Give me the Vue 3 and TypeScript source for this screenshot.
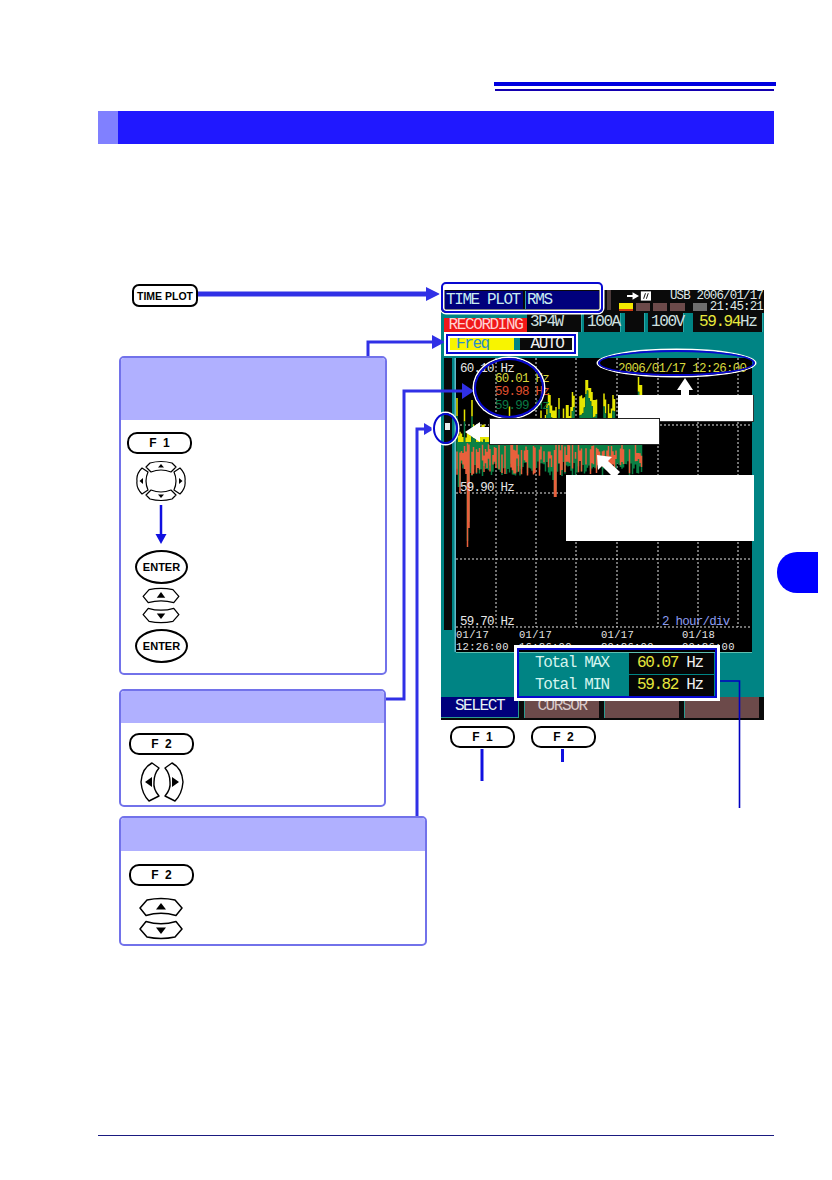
<script setup lang="ts">
import { computed } from 'vue'

function makeRandom(seed: number) {
  let s = seed
  return () => {
    s = (s * 9301 + 49297) % 233280
    return s / 233280
  }
}

const yellowPeaks: Array<[number, number]> = [
  [1, 40], [16, 42], [103, 40], [111, 47], [131, 22], [134, 30], [138, 42], [157, 37], [183, 19], [185, 27]
]
const orangeDrops: Array<[number, number]> = [[12, 189], [13, 170], [99, 139], [97, 128], [3, 135]]

const wave = computed(() => {
  const r = makeRandom(77)
  let yellow = ''
  let green = ''
  let orange = ''
  for (let x = 1; x < 187; x += 1.5) {
    const busy = x > 88 && x < 165
    const spike = r() < (busy ? 0.5 : 0.22)
    let top = spike ? (busy ? 32 : 48) + r() * 26 : 66 + r() * 14
    for (const [px, py] of yellowPeaks) if (Math.abs(x - px) < 1.2) top = py
    const greenTop = Math.min(top + 10 + r() * 10, 84)
    const greenBottom = 102 + r() * 16
    const orangeTop = 84 + r() * 14
    let orangeBottom = 100 + r() * 18
    for (const [px, py] of orangeDrops) if (Math.abs(x - px) < 1.2) orangeBottom = py
    yellow += `M${x} ${top.toFixed(1)}V${greenTop.toFixed(1)}`
    green += `M${x} ${greenTop.toFixed(1)}V${Math.max(greenBottom, orangeBottom - 6).toFixed(1)}`
    if (r() < 0.62) orange += `M${x} ${orangeTop.toFixed(1)}V${orangeBottom.toFixed(1)}`
  }
  return { yellow, green, orange }
})

const vGrid = [40, 80, 120, 161, 202, 242, 282]
const hGrid = [67, 135, 201, 269]
const timeLabels = [
  { x: 0, d: '01/17', t: '12:26:00' },
  { x: 63, d: '01/17', t: '16:26:00' },
  { x: 145, d: '01/17', t: '20:26:00' },
  { x: 226, d: '01/18', t: '00:26:00' }
]
</script>

<template>
  <div class="page">
    <svg class="defs" aria-hidden="true">
      <symbol id="key-up" viewBox="0 0 46 20">
        <path d="M2 11 L9 3 Q23 0 37 3 L44 11 L38 18.5 Q23 14 8 18.5 Z" fill="#fff" stroke="#000" stroke-width="1.5" stroke-linejoin="round" />
        <path d="M18 12.5 L23 6 L28 12.5 Z" fill="#000" />
      </symbol>
      <symbol id="key-down" viewBox="0 0 46 20">
        <g transform="matrix(1 0 0 -1 0 20)">
          <path d="M2 11 L9 3 Q23 0 37 3 L44 11 L38 18.5 Q23 14 8 18.5 Z" fill="#fff" stroke="#000" stroke-width="1.5" stroke-linejoin="round" />
          <path d="M18 12.5 L23 6 L28 12.5 Z" fill="#000" />
        </g>
      </symbol>
    </svg>

    <div class="rule-a"></div>
    <div class="rule-b"></div>
    <div class="title-bar"><span class="swatch"></span></div>

    <div class="diagram">
      <div class="left">
        <div class="key time-key">TIME PLOT</div>

        <section class="panel panel-one">
          <div class="panel-head tall"></div>
          <div class="panel-body">
            <div class="key fkey f1">F 1</div>
            <svg class="dpad" viewBox="0 0 50 44">
              <g fill="#fff" stroke="#000" stroke-width="1.2" stroke-linejoin="round">
                <path d="M10 8 L14 4 Q25 1 36 4 L40 8 L35 13 Q25 9 15 13 Z" />
                <path d="M10 36 L14 40 Q25 43 36 40 L40 36 L35 31 Q25 35 15 31 Z" />
                <path d="M6 9 Q0 15 1 22 Q0 29 6 35 L12 31 Q8 22 12 13 Z" />
                <path d="M44 9 Q50 15 49 22 Q50 29 44 35 L38 31 Q42 22 38 13 Z" />
              </g>
              <g fill="#000">
                <path d="M22 8.5 L25 5 L28 8.5 Z" />
                <path d="M22 35.5 L25 39 L28 35.5 Z" />
                <path d="M3.5 22 L7 19 V25 Z" />
                <path d="M46.5 22 L43 19 V25 Z" />
              </g>
            </svg>
            <svg class="down-arrow" viewBox="0 0 16 39">
              <path d="M8 0 V30" stroke="#1010e0" stroke-width="2.5" />
              <path d="M2.5 29 H13.5 L8 39 Z" fill="#1010e0" />
            </svg>
            <div class="key enter">ENTER</div>
            <svg class="small-key first"><use href="#key-up" /></svg>
            <svg class="small-key second"><use href="#key-down" /></svg>
            <div class="key enter last">ENTER</div>
          </div>
        </section>

        <section class="panel panel-two">
          <div class="panel-head"></div>
          <div class="panel-body">
            <div class="key fkey f2">F 2</div>
            <svg class="left-right" viewBox="0 0 46 40">
              <g fill="#fff" stroke="#000" stroke-width="1.4" stroke-linejoin="round">
                <path d="M13 1 Q3 6 2 20 Q3 32 10 39 L20 34 Q14 27 15 20 Q15 12 20 6 Z" />
                <path d="M33 1 Q43 6 44 20 Q43 32 36 39 L26 34 Q32 27 31 20 Q31 12 26 6 Z" />
              </g>
              <path d="M6 20 L13 15 V25 Z" fill="#000" />
              <path d="M40 20 L33 15 V25 Z" fill="#000" />
            </svg>
          </div>
        </section>

        <section class="panel panel-three">
          <div class="panel-head"></div>
          <div class="panel-body">
            <div class="key fkey f2b">F 2</div>
            <svg class="big-key first"><use href="#key-up" /></svg>
            <svg class="big-key second"><use href="#key-down" /></svg>
          </div>
        </section>
      </div>

      <div class="right">
        <div class="device">
          <div class="status">
            <span class="title-box wide">TIME PLOT</span>
            <span class="title-box">RMS</span>
            <span class="divider"></span>
            <div class="status-right">
              <div class="status-row">
                <svg class="plug" viewBox="0 0 26 10">
                  <path d="M0 4 H6 V1 L13 5 L6 9 V6 H0 Z" fill="#fff" />
                  <path d="M15 0 H26 V10 H15 Z" fill="#fff" />
                  <path d="M18 8 L20 2 M21 8 L23 2" stroke="#000" stroke-width="1" />
                </svg>
                <span class="clock">USB 2006/01/17</span>
              </div>
              <div class="status-row">
                <span class="lamp on"></span>
                <span class="lamp"></span>
                <span class="lamp"></span>
                <span class="lamp"></span>
                <span class="lamp grey"></span>
                <span class="clock">21:45:21</span>
              </div>
            </div>
          </div>

          <div class="readouts">
            <span class="recording">RECORDING</span>
            <span class="readout r-wire">3P4W</span>
            <span class="readout r-amp">100A</span>
            <span class="readout r-blank"></span>
            <span class="readout r-volt">100V</span>
            <span class="readout r-freq"><b>59.94</b>Hz</span>
          </div>

          <div class="mode">
            <span class="mode-freq">Freq</span>
            <span class="mode-auto">AUTO</span>
          </div>

          <div class="plot-row">
            <div class="strip"><span class="thumb"></span></div>
            <svg class="plot" viewBox="0 0 296 294">
              <g stroke="#e4e4e4" stroke-width="1" stroke-dasharray="2 2">
                <path v-for="x in vGrid" :key="'v' + x" :d="`M${x} 0V269`" />
                <path v-for="y in hGrid" :key="'h' + y" :d="`M0 ${y}H296`" />
              </g>
              <g fill="none" stroke-width="1.5">
                <path :d="wave.yellow" stroke="#e6e600" />
                <path :d="wave.green" stroke="#0a8044" />
                <path :d="wave.orange" stroke="#e8603c" />
              </g>
              <g class="plot-text">
                <text x="4" y="14" fill="#e6e6e6">60.10 Hz</text>
                <text x="39" y="24" fill="#d6d63c">60.01 Hz</text>
                <text x="39" y="37" fill="#e0502e">59.98 Hz</text>
                <text x="39" y="51" fill="#0a7a45">59.99 Hz</text>
                <text x="162" y="14" fill="#d8d83c">2006/01/17 12:26:00</text>
                <text x="4" y="133" fill="#e6e6e6">59.90 Hz</text>
                <text x="4" y="267" fill="#e6e6e6">59.70 Hz</text>
                <text x="206" y="267" fill="#8c9cf0">2 hour/div</text>
              </g>
              <g class="time-text">
                <template v-for="t in timeLabels" :key="t.x">
                  <text :x="t.x" y="280" fill="#e6e6e6">{{ t.d }}</text>
                  <text :x="t.x" y="292" fill="#e6e6e6">{{ t.t }}</text>
                </template>
              </g>
            </svg>
          </div>

          <div class="totals">
            <div class="total-row">
              <span class="total-label">Total MAX</span>
              <span class="total-value"><b>60.07</b> Hz</span>
            </div>
            <div class="total-row">
              <span class="total-label">Total MIN</span>
              <span class="total-value"><b>59.82</b> Hz</span>
            </div>
          </div>

          <div class="softkeys">
            <span class="soft active">SELECT</span>
            <span class="soft">CURSOR</span>
            <span class="soft"></span>
            <span class="soft"></span>
          </div>
        </div>

        <div class="device-keys">
          <div class="key fkey">F 1</div>
          <div class="key fkey">F 2</div>
        </div>
      </div>
    </div>

    <div class="footer-rule"></div>
    <div class="side-tab"></div>

    <svg class="overlay" viewBox="0 0 832 1180">
      <g fill="none" stroke="#3030e6">
        <path d="M198 294 H428" stroke-width="5" />
        <path d="M368 356 V342 H434" stroke-width="3" />
        <path d="M386 699 H404 V391 H464" stroke-width="3" />
        <path d="M417 816 V429 H425" stroke-width="3" />
      </g>
      <g fill="#3030e6">
        <path d="M426 287 L440 294 L426 301 Z" />
        <path d="M432 335 L445 342 L432 349 Z" />
        <path d="M462 383 L474 391 L462 399 Z" />
        <path d="M424 423 L434 429 L424 435 Z" />
      </g>
      <g fill="none" stroke="#1010e0" stroke-width="3">
        <path d="M482 749 V781" />
        <path d="M562.5 749 V762" />
      </g>
      <path d="M717 681 H739.5 V808" fill="none" stroke="#0000c0" stroke-width="1.6" />
      <g fill="#fff">
        <path d="M685 378 L693 390 H689 V396 H681 V390 H677 Z" />
        <path d="M465 432 L480 422 V427 H490 V437 H480 V442 Z" />
        <path d="M597 455 L612 457 L608 461 L620 472 L614 478 L602 466 L598 470 Z" />
      </g>
    </svg>

    <span class="frame frame-title"></span>
    <span class="frame frame-mode"></span>
    <span class="frame frame-circle"></span>
    <span class="frame frame-thumb"></span>
    <span class="frame frame-date"></span>
    <span class="frame frame-total"></span>

    <span class="callout callout-date"></span>
    <span class="callout callout-thumb"></span>
    <span class="callout callout-wave"></span>
  </div>
</template>

<style>
html,
body {
  margin: 0;
  background: #fff;
}
</style>

<style scoped>
.page {
  position: relative;
  width: 832px;
  height: 1180px;
  overflow: hidden;
  background: #fff;
  font-family: "Liberation Sans", Arial, sans-serif;
}
.defs {
  position: absolute;
  width: 0;
  height: 0;
}
.rule-a {
  margin: 82px 56px 0 494px;
  height: 4px;
  background: #0000e0;
}
.rule-b {
  margin: 3px 58px 0 495px;
  height: 2px;
  background: #1400b0;
}
.title-bar {
  display: flex;
  margin: 20px 58px 0 98px;
  height: 33px;
  background: #2018ff;
}
.swatch {
  width: 20px;
  background: #8080ff;
}
.diagram {
  display: flex;
  margin-top: 140px;
  padding-left: 119px;
}
.left {
  width: 308px;
  display: flex;
  flex-direction: column;
  align-items: flex-start;
}
.key {
  box-sizing: border-box;
  display: flex;
  align-items: center;
  justify-content: center;
  background: #fff;
  color: #000;
  border: 2.5px solid #000;
  font-weight: 700;
}
.time-key {
  width: 66px;
  height: 23px;
  margin-left: 13px;
  border-radius: 7px;
  font-size: 10.5px;
  white-space: nowrap;
}
.fkey {
  width: 65px;
  height: 22px;
  border-radius: 10px;
  font-size: 12px;
  word-spacing: 3px;
}
.enter {
  width: 53px;
  height: 34px;
  margin-top: 6px;
  margin-left: 8px;
  border-radius: 50%;
  font-size: 11px;
}
.enter.last {
  margin-top: 5px;
}
.panel {
  box-sizing: border-box;
  border: 2px solid #7272ea;
  border-radius: 5px;
  overflow: hidden;
  background: #fff;
}
.panel-head {
  height: 32px;
  background: #b0b0ff;
}
.panel-head.tall {
  height: 62px;
}
.panel-body {
  display: flex;
  flex-direction: column;
  align-items: flex-start;
}
.panel-one {
  width: 268px;
  margin-top: 49px;
}
.panel-one .panel-body {
  padding: 12px 0 10px 6px;
}
.dpad {
  width: 50px;
  height: 44px;
  margin: 5px 0 0 9px;
}
.down-arrow {
  width: 16px;
  height: 39px;
  margin: 2px 0 0 26px;
}
.small-key {
  width: 40px;
  height: 17px;
  margin-left: 14px;
}
.small-key.first {
  margin-top: 3px;
}
.small-key.second {
  margin-top: 3px;
}
.panel-two {
  width: 267px;
  margin-top: 14px;
}
.panel-two .panel-body {
  padding: 10px 0 3px 8px;
}
.left-right {
  width: 46px;
  height: 40px;
  margin: 7px 0 0 10px;
}
.panel-three {
  width: 308px;
  margin-top: 9px;
}
.panel-three .panel-head {
  height: 33px;
}
.panel-three .panel-body {
  padding: 13px 0 4px 8px;
}
.big-key {
  width: 46px;
  height: 20px;
  margin-left: 9px;
}
.big-key.first {
  margin-top: 11px;
}
.big-key.second {
  margin-top: 3px;
}
.right {
  margin-left: 14px;
  margin-top: 6px;
}
.device {
  display: flex;
  flex-direction: column;
  width: 323px;
  height: 430px;
  background: #008484;
  font-family: "Liberation Mono", "DejaVu Sans Mono", monospace;
  color: #e8f4f4;
  white-space: nowrap;
}
.status {
  display: flex;
  align-items: flex-start;
  height: 23px;
  padding-left: 4px;
  background: #0a0a0a;
}
.title-box {
  box-sizing: border-box;
  width: 74px;
  height: 18px;
  margin: 1px 0 0 2px;
  padding-left: 1px;
  background: #00007c;
  border-left: 1px solid #2a9aa8;
  color: #c8ecf0;
  font-size: 16px;
  letter-spacing: -1.4px;
  line-height: 18px;
}
.title-box.wide {
  width: 78px;
  margin-left: 0;
  border-left: 0;
}
.divider {
  width: 4px;
  height: 20px;
  margin-left: 8px;
  background: #4c3a3a;
}
.status-right {
  display: flex;
  flex-direction: column;
  width: 147px;
  margin-left: 6px;
}
.status-row {
  display: flex;
  align-items: center;
  gap: 3px;
  height: 11px;
  padding-left: 2px;
  font-size: 12.5px;
  letter-spacing: -0.85px;
}
.plug {
  width: 24px;
  height: 10px;
  margin-left: 8px;
}
.clock {
  margin-left: auto;
  padding-right: 1px;
  color: #dfe8e8;
}
.lamp {
  width: 15px;
  height: 8px;
  background: #6c4a4a;
}
.lamp.on {
  background: linear-gradient(#f4e800 70%, #d03a10 70%);
}
.lamp.grey {
  margin-left: 5px;
  background: #6e6e6e;
}
.readouts {
  display: flex;
  align-items: flex-end;
  height: 19px;
  padding-left: 3px;
  font-size: 16px;
  letter-spacing: -1.4px;
}
.recording {
  width: 83px;
  height: 14px;
  background: #f01818;
  color: #ffd0d0;
  line-height: 14px;
  text-align: center;
}
.readout {
  box-sizing: border-box;
  height: 19px;
  background: #0a0a0a;
  color: #cfe0e0;
  line-height: 18px;
  padding-left: 3px;
  border-right: 1px solid #2aa8a8;
}
.r-wire {
  width: 55px;
}
.r-amp {
  width: 37px;
  margin-left: 2px;
}
.r-blank {
  width: 20px;
  margin-left: 4px;
}
.r-volt {
  width: 36px;
  margin-left: 3px;
}
.r-freq {
  width: 70px;
  margin-left: 9px;
  padding-left: 6px;
}
.r-freq b {
  font-weight: 400;
  color: #e8e83c;
}
.mode {
  display: flex;
  height: 26px;
  padding: 5px 0 0 8px;
  box-sizing: border-box;
  font-size: 16px;
  letter-spacing: -1.4px;
  line-height: 15px;
}
.mode-freq {
  width: 65px;
  height: 15px;
  padding-left: 7px;
  box-sizing: border-box;
  background: #f8f400;
  color: #2a8cc8;
}
.mode-auto {
  width: 54px;
  height: 15px;
  margin-left: 6px;
  background: #0a0a0a;
  color: #f0f0f0;
  text-align: center;
}
.plot-row {
  display: flex;
  align-items: flex-start;
  height: 294px;
  padding-left: 3px;
}
.strip {
  position: relative;
  width: 8px;
  height: 272px;
  background: #0a0a0a;
}
.thumb {
  position: absolute;
  top: 65px;
  left: 1px;
  width: 5px;
  height: 7px;
  background: #e8eeee;
}
.plot {
  width: 296px;
  height: 294px;
  margin-left: 4px;
  background: #000;
  box-shadow: -1.5px 0 0 #62b8c8, 0 1px 0 #5ec0b0;
}
.plot-text {
  font-size: 12.5px;
  letter-spacing: -0.75px;
  font-family: "Liberation Mono", "DejaVu Sans Mono", monospace;
}
.time-text {
  font-size: 10.5px;
  letter-spacing: 0.3px;
  font-family: "Liberation Mono", "DejaVu Sans Mono", monospace;
}
.totals {
  display: flex;
  flex-direction: column;
  flex: 1;
  padding: 0 0 1px 94px;
  font-size: 16px;
  letter-spacing: -1.4px;
}
.total-row {
  display: flex;
  align-items: center;
  height: 22px;
}
.total-label {
  width: 94px;
  color: #d4f4ee;
}
.total-value {
  box-sizing: border-box;
  width: 85px;
  height: 21px;
  padding-left: 8px;
  background: #050505;
  color: #f0f0f0;
  line-height: 21px;
}
.total-value b {
  font-weight: 400;
  color: #e6e63c;
}
.softkeys {
  display: flex;
  height: 23px;
  gap: 5px;
  padding-right: 2px;
  background: #0a0a0a;
  font-size: 16px;
  letter-spacing: -1.4px;
}
.soft {
  box-sizing: border-box;
  width: 75px;
  height: 21px;
  background: #6c4a4a;
  color: #d8c8c8;
  text-align: center;
  line-height: 18px;
  border-left: 1px solid #2a9a90;
}
.soft.active {
  width: 78px;
  background: #00007c;
  color: #e8f4f4;
  border-bottom: 1px solid #2a9a90;
  border-right: 1px solid #2a9a90;
  border-left: 0;
}
.device-keys {
  display: flex;
  gap: 16px;
  margin: 6px 0 0 9px;
}
.footer-rule {
  height: 1px;
  margin: 189px 58px 0 98px;
  background: #1a1a80;
}
.side-tab {
  position: absolute;
  top: 552px;
  left: 777px;
  width: 41px;
  height: 41px;
  border-radius: 20px 0 0 20px;
  background: #0000ff;
}
.overlay {
  position: absolute;
  inset: 0;
  width: 832px;
  height: 1180px;
  pointer-events: none;
}
.frame {
  position: absolute;
  box-sizing: border-box;
  border: 2.5px solid #0808d0;
  box-shadow: 0 0 0 1.5px #fff, inset 0 0 0 1.5px #fff;
}
.frame-title {
  left: 441px;
  top: 282px;
  width: 162px;
  height: 31px;
  border-radius: 5px;
}
.frame-mode {
  left: 446px;
  top: 334px;
  width: 130px;
  height: 20px;
  border-width: 2px;
  box-shadow: 0 0 0 2px #fff, inset 0 0 0 2px #fff;
}
.frame-circle {
  left: 474px;
  top: 358px;
  width: 70px;
  height: 60px;
  border-radius: 50%;
  box-shadow: 0 0 0 1.5px #fff;
}
.frame-thumb {
  left: 433px;
  top: 413px;
  width: 25px;
  height: 31px;
  border-radius: 50%;
  box-shadow: 0 0 0 1.5px #fff;
}
.frame-date {
  left: 598px;
  top: 350px;
  width: 157px;
  height: 26px;
  border-radius: 50%;
  box-shadow: 0 0 0 1.5px #fff;
}
.frame-total {
  left: 517px;
  top: 648px;
  width: 200px;
  height: 50px;
  border-width: 2px;
  box-shadow: 0 0 0 3px #fff;
}
.callout {
  position: absolute;
  box-sizing: border-box;
  background: #fff;
}
.callout-date {
  left: 618px;
  top: 395px;
  width: 136px;
  height: 27px;
  border: 1px solid #333;
  border-width: 0 1px 1px 0;
}
.callout-thumb {
  left: 489px;
  top: 418px;
  width: 171px;
  height: 27px;
  border: 1px solid #222;
}
.callout-wave {
  left: 566px;
  top: 475px;
  width: 188px;
  height: 66px;
}
</style>
